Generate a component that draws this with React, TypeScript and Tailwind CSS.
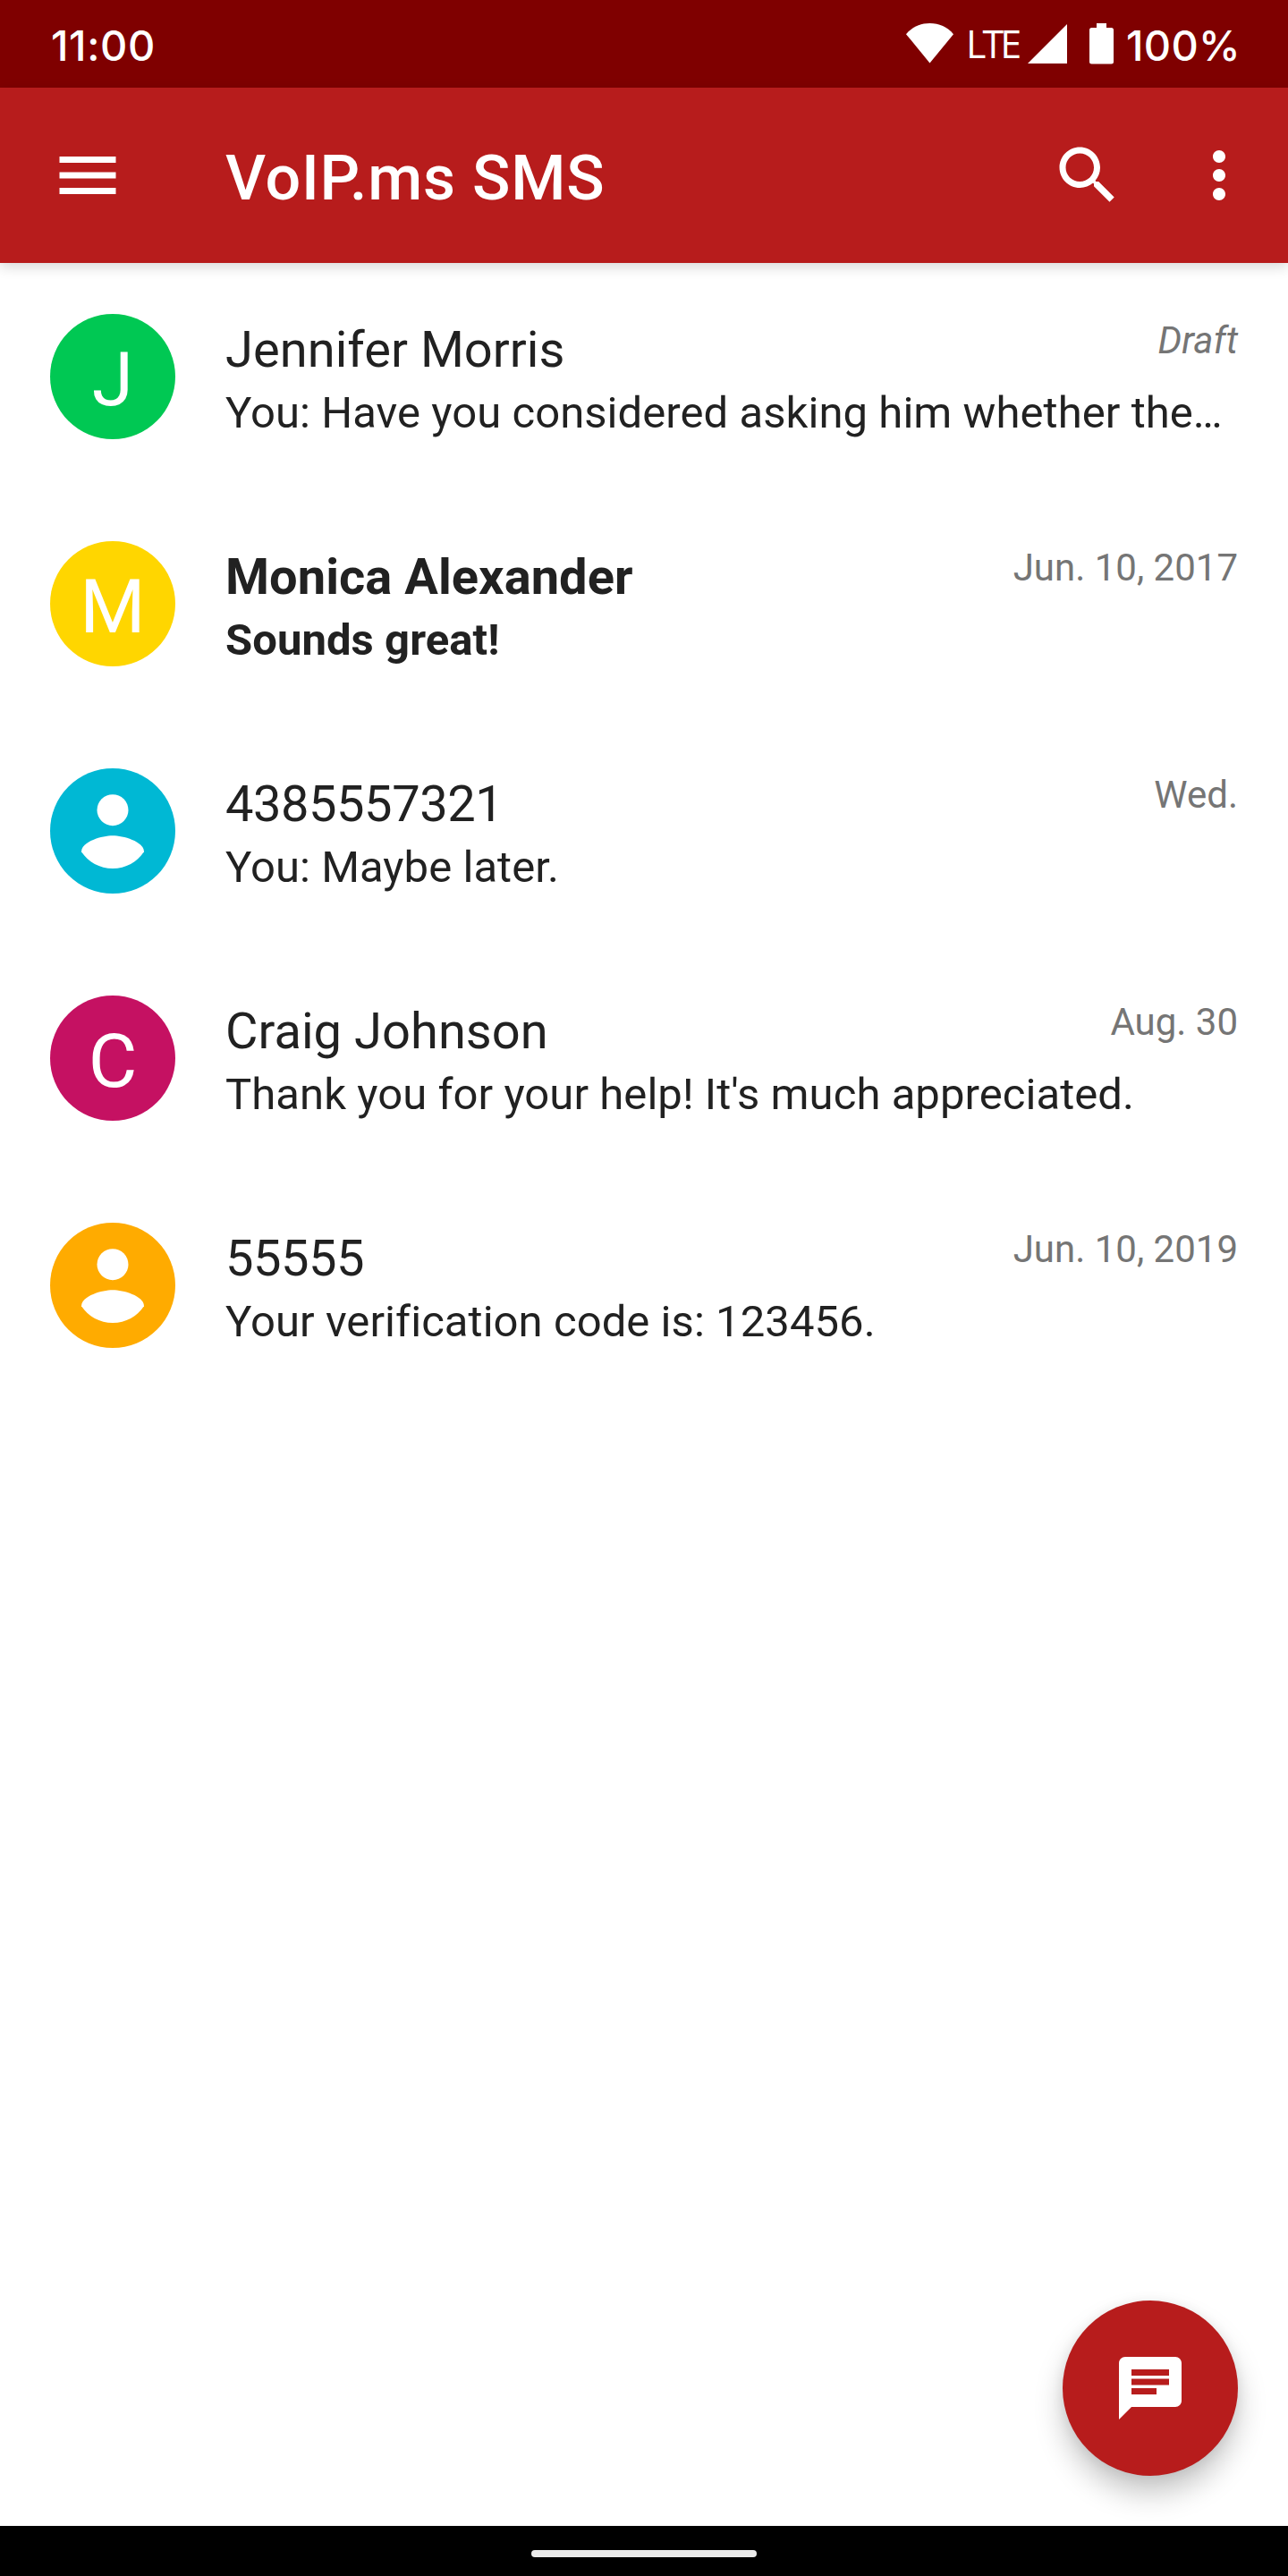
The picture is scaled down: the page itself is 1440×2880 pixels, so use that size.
import React from "react";

type Conversation = {
  name: string;
  preview: string;
  date: string;
  color: string;
  initial?: string;
  unread?: boolean;
  draft?: boolean;
};

const conversations: Conversation[] = [
  {
    name: "Jennifer Morris",
    preview: "You: Have you considered asking him whether the…",
    date: "Draft",
    color: "bg-[#00c853]",
    initial: "J",
    draft: true,
  },
  {
    name: "Monica Alexander",
    preview: "Sounds great!",
    date: "Jun. 10, 2017",
    color: "bg-[#ffd600]",
    initial: "M",
    unread: true,
  },
  { name: "4385557321", preview: "You: Maybe later.", date: "Wed.", color: "bg-[#00b8d4]" },
  {
    name: "Craig Johnson",
    preview: "Thank you for your help! It's much appreciated.",
    date: "Aug. 30",
    color: "bg-[#c51162]",
    initial: "C",
  },
  {
    name: "55555",
    preview: "Your verification code is: 123456.",
    date: "Jun. 10, 2019",
    color: "bg-[#ffab00]",
  },
];

function Icon({ d }: { d: string }) {
  return (
    <svg viewBox="0 0 24 24" className="size-[84px] shrink-0 fill-white">
      <path d={d} />
    </svg>
  );
}

function StatusBar() {
  return (
    <div className="flex h-[98px] items-center bg-[#7f0000] pl-[57px] pr-[56px] text-white">
      <span className="pt-1 font-['Inter',sans-serif] text-[47px] leading-[98px] font-medium tracking-[0.6px]">
        11:00
      </span>
      <div className="ml-auto flex h-[98px] items-start">
        <svg viewBox="0 0 54 45" className="mt-[26px] h-[45px] w-[54px] fill-white">
          <path d="M0 12.2C7 4 16 0 26.5 0S46 4 53 12.2L26.5 44.5z" />
        </svg>
        <span className="ml-[13px] w-[65px] pt-[19px] font-['Open_Sans',sans-serif] text-[43px] leading-[60px] tracking-[-4px]">
          LTE
        </span>
        <svg viewBox="0 0 44 44" className="mt-[27px] ml-[4px] size-[44px] fill-white">
          <path d="M44 0V44H0z" />
        </svg>
        <svg viewBox="0 0 27 46" className="mt-[26px] ml-[25px] h-[46px] w-[27px] fill-white">
          <path d="M8 0h11v5h5.500a2.500 2.500 0 0 1 2.500 2.500v35.500a2.500 2.500 0 0 1-2.500 2.500H2.500A2.500 2.500 0 0 1 0 43V7.500A2.500 2.500 0 0 1 2.500 5H8z" />
        </svg>
        <span className="ml-[14px] w-[125px] pt-[2px] font-['Inter',sans-serif] text-[47px] leading-[98px] font-medium tracking-[0.3px]">
          100%
        </span>
      </div>
    </div>
  );
}

function AppBar() {
  return (
    <header className="relative flex h-[196px] items-center bg-[#b71c1c] pl-[56px] pr-[35px] text-white shadow-[0_4px_14px_rgba(0,0,0,0.16)]">
      <Icon d="M3 18h18v-2H3v2zm0-5h18v-2H3v2zm0-7v2h18V6H3z" />
      <h1 className="ml-[112px] pt-[6px] text-[70px] leading-[82px] font-medium tracking-[0.8px]">VoIP.ms SMS</h1>
      <div className="ml-auto flex gap-[63px]">
        <Icon d="M15.500 14h-.790l-.280-.270C15.410 12.590 16 11.110 16 9.500 16 5.910 13.090 3 9.500 3S3 5.910 3 9.500 5.910 16 9.500 16c1.610 0 3.090-.590 4.230-1.570l.270.280v.790l5 4.990L20.490 19l-4.990-5zm-6 0C7.010 14 5 11.990 5 9.500S7.010 5 9.500 5 14 7.010 14 9.500 11.990 14 9.500 14z" />
        <Icon d="M12 8c1.100 0 2-.900 2-2s-.900-2-2-2-2 .900-2 2 .900 2 2 2zm0 2c-1.100 0-2 .900-2 2s.900 2 2 2 2-.900 2-2-.900-2-2-2zm0 6c-1.100 0-2 .900-2 2s.900 2 2 2 2-.900 2-2-.900-2-2-2z" />
      </div>
    </header>
  );
}

function Avatar({ color, initial }: { color: string; initial?: string }) {
  return (
    <div className={`flex size-[140px] shrink-0 items-center justify-center rounded-full text-white ${color}`}>
      {initial ? (
        <span className="pt-[8px] text-[84px] leading-[98px]">{initial}</span>
      ) : (
        <svg viewBox="0 0 24 24" className="size-[140px] fill-white">
          <circle cx="12" cy="8" r="3" />
          <path d="M12 19.200c-2.500 0-4.710-1.280-6-3.220.030-1.990 4-3.080 6-3.080 1.990 0 5.970 1.090 6 3.080-1.290 1.940-3.500 3.220-6 3.220z" />
        </svg>
      )}
    </div>
  );
}

function ConversationRow({ item }: { item: Conversation }) {
  const weight = item.unread ? "font-bold" : "font-normal";
  const nameTracking = /^\d+$/.test(item.name) ? "tracking-[-0.45px]" : "tracking-[0.05px]";
  return (
    <li className="flex h-[254px] items-center px-[56px]">
      <Avatar color={item.color} initial={item.initial} />
      <div className="ml-[56px] flex h-[140px] min-w-0 flex-1 flex-col gap-[9px] pt-[7px]">
        <div className="flex items-start justify-between">
          <span className={`text-[56px] leading-[66px] text-[#212121] ${nameTracking} ${weight}`}>
            {item.name}
          </span>
          <span
            className={`-mt-[2px] text-[42px] leading-[50px] text-[#757575] ${item.draft ? "italic" : ""}`}
          >
            {item.date}
          </span>
        </div>
        <p className={`truncate text-[49px] leading-[58px] tracking-[0.06px] [font-variant-ligatures:common-ligatures] text-[#212121] ${weight}`}>
          {item.preview}
        </p>
      </div>
    </li>
  );
}

export default function App() {
  return (
    <div className="relative flex h-[2880px] w-[1440px] flex-col overflow-hidden bg-white font-['Roboto',sans-serif]">
      <StatusBar />
      <AppBar />
      <ul className="flex-1">
        {conversations.map((item) => (
          <ConversationRow key={item.name} item={item} />
        ))}
      </ul>
      <button
        aria-label="New conversation"
        className="absolute right-[56px] bottom-[112px] flex size-[196px] items-center justify-center rounded-full bg-[#b71c1c] shadow-[0_20px_32px_rgba(0,0,0,0.22),0_2px_14px_rgba(0,0,0,0.08)]"
      >
        <Icon d="M20 2H4c-1.100 0-1.990.900-1.990 2L2 22l4-4h14c1.100 0 2-.900 2-2V4c0-1.100-.900-2-2-2zM6 9h12v2H6V9zm8 5H6v-2h8v2zm4-6H6V6h12v2z" />
      </button>
      <nav className="relative flex h-[56px] justify-center bg-black pt-[27px]">
        <div className="h-[8px] w-[252px] rounded-full bg-[#ebebeb]" />
      </nav>
    </div>
  );
}
